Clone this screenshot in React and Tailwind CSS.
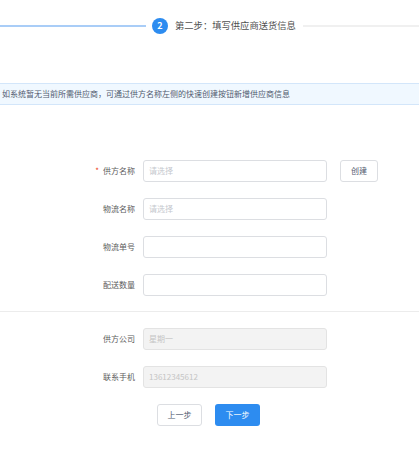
const FONT = { fontFamily: '"Noto Sans CJK SC", "Liberation Sans", sans-serif' };

function Row({ label, required, children }) {
  return (
    <div className="flex items-center h-[22px]">
      <div className="w-[135px] shrink-0 flex justify-end items-center text-[8px] text-[#5c5c5c]">
        {required && <span className="text-[#ed4014] mr-[4px] text-[8px] leading-none">*</span>}
        <span>{label}</span>
      </div>
      <div className="ml-[8px] flex items-center">{children}</div>
    </div>
  );
}

function Input({ placeholder, value, disabled }) {
  return (
    <div
      className={
        "w-[184px] h-[22px] rounded-[3px] border flex items-center px-[5px] text-[8px] " +
        (disabled ? "bg-[#f3f3f3] border-[#e3e3e3] text-[#c5c5c5]" : "bg-white border-[#dcdee2] text-[#c5c8ce]")
      }
    >
      {value || placeholder || ""}
    </div>
  );
}

export default function App() {
  return (
    <div className="w-[419px] h-[453px] bg-white overflow-hidden" style={FONT}>
      <div className="pt-[18px] flex items-center h-[34px]">
        <div className="w-[146px] h-[2px] bg-[#a9cdf7]" />
        <div className="ml-[6px] w-[16px] h-[16px] rounded-full bg-[#2d8cf0] text-white text-[9px] font-bold flex items-center justify-center">
          2
        </div>
        <div className="ml-[7px] text-[9.3px] text-[#4f4f4f] whitespace-nowrap">第二步：填写供应商送货信息</div>
        <div className="ml-[7px] flex-1 h-[2px] bg-[#f0f0f0]" />
      </div>

      <div className="mt-[49px] h-[22px] bg-[#f0f8ff] border-y border-[#d3e6fa] flex items-center pl-[2px] text-[8px] text-[#515a6e] whitespace-nowrap">
        如系统暂无当前所需供应商，可通过供方名称左侧的快速创建按钮新增供应商信息
      </div>

      <div className="mt-[55px] flex flex-col gap-[16px]">
        <Row label="供方名称" required>
          <Input placeholder="请选择" />
          <div className="ml-[13px] w-[38px] h-[22px] rounded-[3px] border border-[#dcdee2] flex items-center justify-center text-[8px] text-[#515a6e]">
            创建
          </div>
        </Row>
        <Row label="物流名称">
          <Input placeholder="请选择" />
        </Row>
        <Row label="物流单号">
          <Input />
        </Row>
        <Row label="配送数量">
          <Input />
        </Row>
      </div>

      <div className="mt-[15px] h-px bg-[#ececec]" />

      <div className="mt-[16px] flex flex-col gap-[16px]">
        <Row label="供方公司">
          <Input value="星期一" disabled />
        </Row>
        <Row label="联系手机">
          <Input value="13612345612" disabled />
        </Row>
      </div>

      <div className="mt-[16px] flex pl-[157px] gap-[13px]">
        <div className="w-[45px] h-[22px] rounded-[3px] border border-[#dcdee2] bg-white flex items-center justify-center text-[8px] text-[#515a6e]">
          上一步
        </div>
        <div className="w-[45px] h-[22px] rounded-[3px] bg-[#2d8cf0] flex items-center justify-center text-[8px] text-white">
          下一步
        </div>
      </div>
    </div>
  );
}
